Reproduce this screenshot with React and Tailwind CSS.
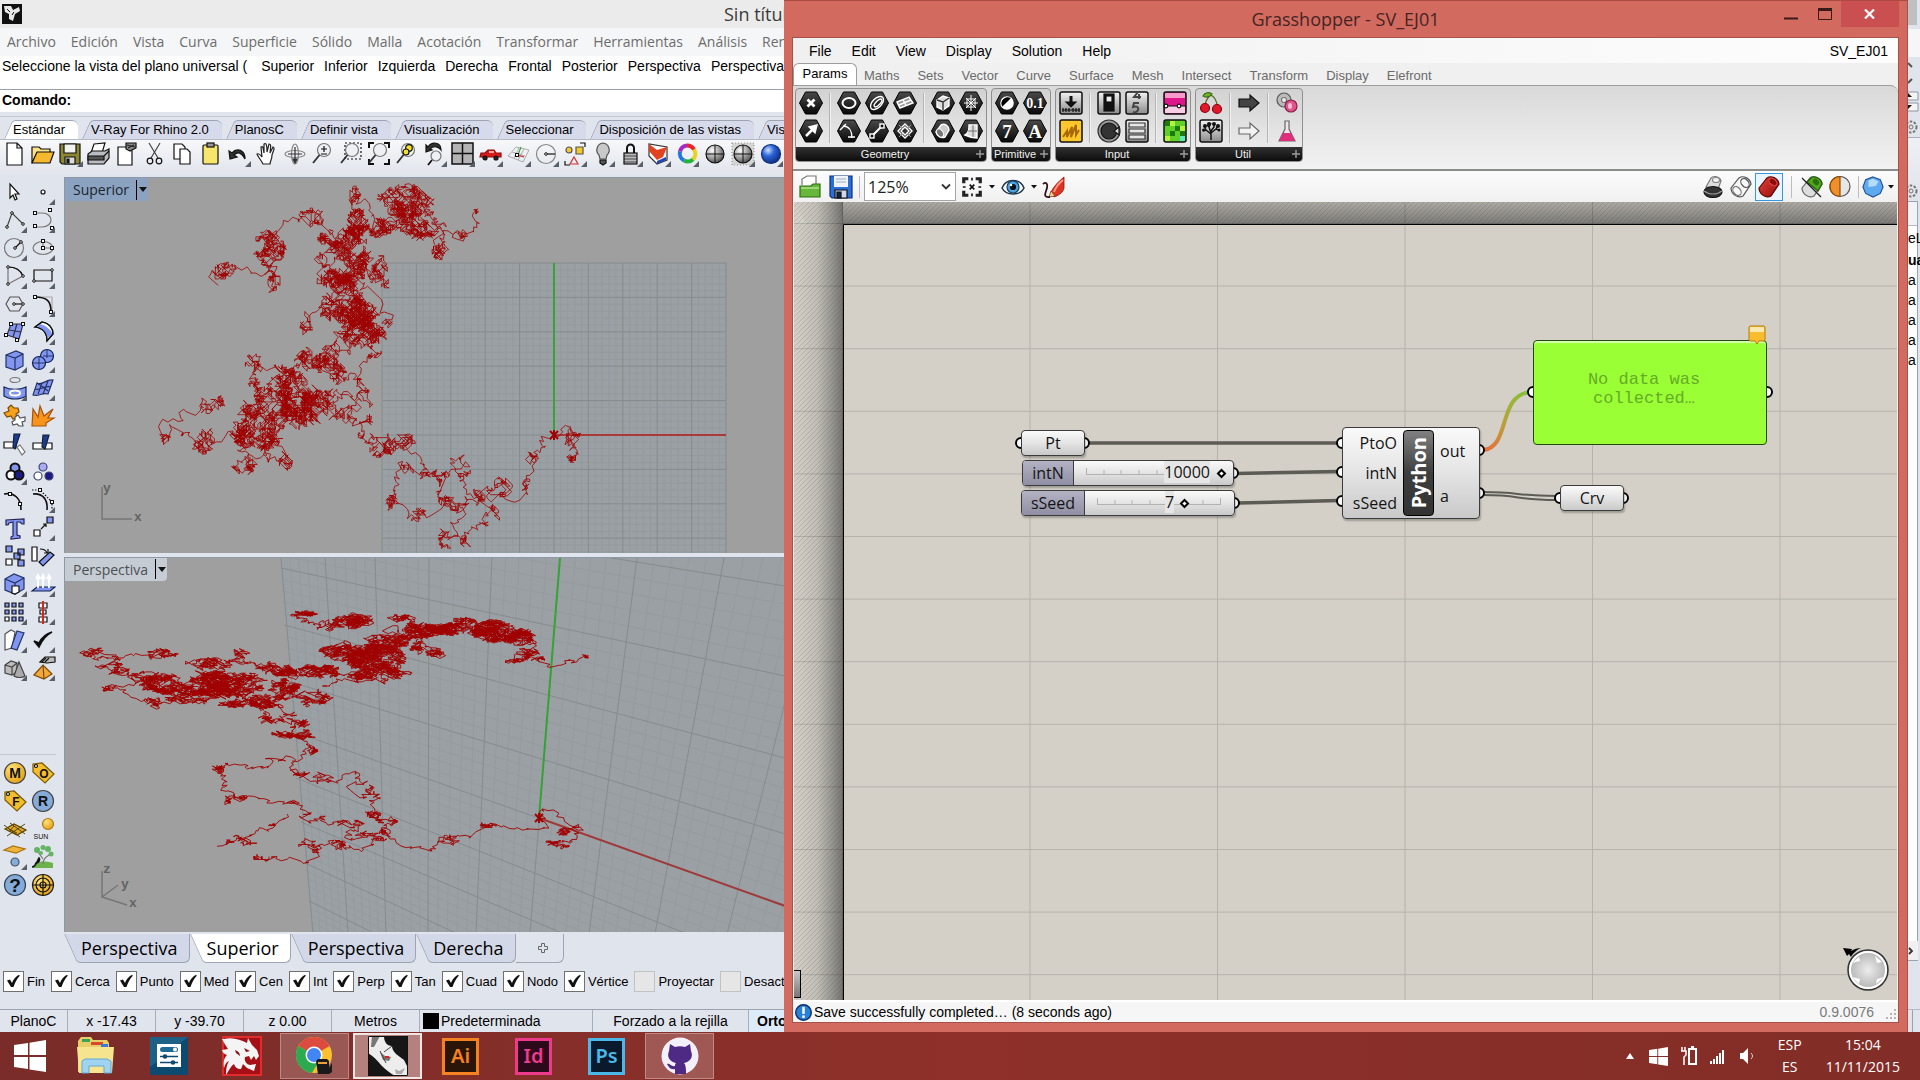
import React from "react";

/* ---------- deterministic random walks drawn in the viewports ---------- */

function makeRandom(seed) {
  let s = seed;
  return () => {
    s = (s * 1664525 + 1013904223) % 4294967296;
    return s / 4294967296;
  };
}

const DIRS = [[1, 0], [1, 1], [0, 1], [-1, 1], [-1, 0], [-1, -1], [0, -1], [1, -1]];

// stops: [x, y, rx, ry, steps, jump]
function walkPath(stops, seed, sx, sy) {
  const rnd = makeRandom(seed);
  let x = stops[0][0];
  let y = stops[0][1];
  let d = `M${x} ${y}`;
  const push = () => {
    d += `L${x.toFixed(1)} ${y.toFixed(1)}`;
  };
  for (const [tx, ty, rx = 2, ry = 2, n = 0, jump = 0] of stops) {
    if (jump) {
      x = tx;
      y = ty;
      d += `M${x} ${y}`;
    }
    let guard = 0;
    while (Math.hypot(tx - x, ty - y) > 5 && guard < 80) {
      const dist = Math.hypot(tx - x, ty - y);
      const dir = DIRS[Math.floor(rnd() * 8)];
      x += dir[0] * sx + ((tx - x) / dist) * 2.2;
      y += dir[1] * sy + ((ty - y) / dist) * 2.2;
      push();
      guard += 1;
    }
    for (let i = 0; i < n; i += 1) {
      const dir = DIRS[Math.floor(rnd() * 8)];
      const len = 0.7 + rnd() * 1.1;
      let nx = x + dir[0] * sx * len;
      let ny = y + dir[1] * sy * len;
      const e = ((nx - tx) / rx) ** 2 + ((ny - ty) / ry) ** 2;
      if (e > 1.1 + rnd() * 0.9) {
        nx = x + Math.sign(tx - x) * sx * rnd();
        ny = y + Math.sign(ty - y) * sy * rnd();
      }
      x = nx;
      y = ny;
      push();
    }
  }
  return d;
}

const TOP_WALK = walkPath([
  [489, 257], [500, 248], [509, 263, 8, 13, 34], [502, 280, 8, 6, 24], [486, 262, 2, 2, 0, 1], [470, 280, 8, 6, 24],
  [461, 300, 4, 12, 18], [458, 320], [435, 313, 14, 12, 60], [414, 313, 6, 10, 30], [398, 290, 14, 10, 30],
  [375, 293, 8, 14, 36], [389, 326, 16, 7, 44], [380, 360, 6, 12, 36], [398, 363, 10, 6, 26], [426, 336, 8, 10, 26],
  [412, 324], [375, 323, 4, 6, 10], [352, 336, 12, 6, 36], [326, 316, 6, 16, 40], [343, 293, 6, 8, 16], [361, 296, 10, 4, 26],
  [347, 273], [338, 263, 12, 8, 50], [315, 266, 16, 11, 120], [292, 256], [301, 240, 6, 8, 20],
  [273, 226, 30, 22, 420], [227, 233, 32, 32, 640], [228, 222, 12, 22, 240], [195, 253, 28, 16, 480],
  [181, 286, 14, 10, 40], [170, 292, 5, 5, 16], [205, 272], [218, 286, 9, 11, 46], [190, 262], [135, 263, 14, 12, 90],
  [100, 256, 5, 10, 22], [100, 246], [121, 240], [144, 223, 12, 12, 60], [181, 243, 15, 15, 120, 1], [190, 210, 8, 8, 40],
  [188, 186, 8, 9, 40], [213, 196, 14, 8, 50], [246, 183, 14, 11, 150], [273, 183, 16, 10, 120], [273, 200, 8, 6, 40],
  [294, 198, 6, 10, 20], [302, 175], [310, 173, 8, 8, 25], [278, 156, 32, 18, 420], [290, 136, 18, 14, 520],
  [273, 120, 25, 22, 460], [241, 143, 6, 14, 40], [322, 145, 5, 5, 14, 1], [273, 83, 26, 28, 520], [315, 93, 7, 18, 80],
  [320, 108, 5, 6, 14], [285, 70, 14, 18, 200], [269, 60, 14, 10, 120], [246, 40, 12, 8, 70], [230, 40], [215, 52],
  [204, 70, 14, 15, 240], [209, 106, 7, 10, 40], [200, 90], [158, 93, 14, 8, 80], [154, 107],
  [292, 46, 10, 15, 260, 1], [287, 16, 8, 8, 40], [320, 50, 15, 10, 150], [338, 23, 25, 14, 480], [357, 46, 19, 12, 300],
  [375, 73, 7, 9, 70], [394, 56, 9, 4, 20], [408, 50], [410, 34, 3, 6, 12],
], 7, 3, 3);

const PERSP_WALK = walkPath([
  [474, 260], [486, 251], [500, 262], [504, 270, 12, 9, 44], [508, 286], [486, 288, 15, 5, 44],
  [476, 262, 2, 2, 0, 1], [477, 269], [449, 269], [426, 264, 14, 5, 30], [403, 276], [384, 283, 12, 7, 25],
  [366, 296], [343, 293], [326, 276, 10, 14, 40], [301, 260, 20, 6, 50], [306, 240, 9, 14, 30], [283, 223, 16, 8, 24],
  [259, 223, 12, 8, 26], [236, 213, 8, 5, 24], [204, 206], [164, 211, 16, 5, 50], [166, 226], [170, 240, 10, 12, 50],
  [204, 241], [227, 246, 6, 4, 10], [246, 260, 12, 5, 20], [283, 270, 14, 8, 40], [301, 283, 16, 8, 44],
  [273, 290, 10, 8, 30], [241, 290, 12, 9, 28], [236, 302], [204, 300, 16, 4, 26], [222, 256, 2, 2, 0, 1],
  [195, 270], [181, 283, 18, 5, 50], [149, 290],
  [227, 203, 2, 2, 0, 1], [248, 190, 5, 7, 34], [232, 176, 18, 4, 80], [213, 178, 14, 5, 54], [222, 166, 20, 5, 70],
  [200, 160, 10, 5, 44], [236, 155], [200, 143, 30, 6, 220], [246, 140, 18, 7, 110], [218, 130, 14, 9, 220],
  [167, 146, 12, 4, 80], [153, 126, 44, 11, 1100], [102, 126, 22, 8, 360], [126, 140, 24, 5, 130], [88, 146, 9, 7, 30],
  [65, 136], [42, 131, 8, 3, 24], [79, 120, 16, 6, 90], [47, 110, 16, 5, 70], [33, 95, 16, 4, 54], [65, 99],
  [98, 95, 16, 4, 70], [149, 106, 30, 5, 160, 1], [176, 95, 9, 4, 34], [218, 110, 22, 7, 200], [255, 113, 20, 6, 240],
  [310, 116, 24, 9, 270], [312, 100, 24, 13, 800], [283, 93, 26, 9, 320], [262, 128, 14, 1, 12, 1], [300, 120, 10, 4, 30],
  [345, 115, 3, 2, 4], [320, 83, 22, 7, 240], [347, 73, 24, 7, 340], [384, 71, 20, 5, 420], [352, 90, 7, 6, 50],
  [370, 96, 8, 8, 54], [338, 60, 12, 4, 60], [287, 63, 18, 6, 280, 1], [264, 68, 12, 5, 40], [232, 56, 16, 3, 100],
  [398, 63, 14, 3, 60, 1], [431, 73, 22, 9, 560], [454, 82, 14, 9, 300], [462, 94, 10, 5, 70], [449, 103, 10, 2, 40],
  [477, 101, 12, 2, 25], [500, 101], [521, 98, 5, 2, 12],
], 23, 3.6, 1.8);

/* ---------- small drawing helpers ---------- */

function Svg({ size = 24, children, className = "" }) {
  return (
    <svg viewBox="0 0 24 24" width={size} height={size} fill="none" stroke="#111" strokeWidth="1.2" className={className} aria-hidden="true">
      {children}
    </svg>
  );
}

const Tri = () => <path d="M27 21v6h-6z" fill="#5b6068" stroke="none" />;

function ToolButton({ label, tri, children, className = "" }) {
  return (
    <button type="button" aria-label={label} className={`relative flex h-7 w-7 shrink-0 items-center justify-center ${className}`}>
      <svg viewBox="0 0 28 28" width="28" height="28" fill="none" stroke="#111" strokeWidth="1.2" aria-hidden="true">
        <g transform="translate(3 2)">{children}</g>
        {tri ? <Tri /> : null}
      </svg>
    </button>
  );
}

const sq = (x, y, f = "#fff") => <rect x={x - 1.5} y={y - 1.5} width="3" height="3" fill={f} stroke="#111" strokeWidth="1" />;
const dot = (x, y) => <circle cx={x} cy={y} r="1.3" fill="#fff" stroke="#111" strokeWidth="1" />;

const lens = (
  <>
    <circle cx="13" cy="8" r="6.5" fill="#eef0f4" stroke="#777" />
    <path d="M8.5 13L2 21" stroke="#333" strokeWidth="1.8" />
  </>
);

const MAIN_TOOLS = [
  ["Nuevo", 0, <path d="M4 1h10l5 5v17H4zM14 1v5h5" fill="#fff" />],
  ["Abrir", 0, <><path d="M1 5h7l2 2h9v4H6L1 21z" fill="#fbe38a" /><path d="M1 21L6 10h17l-4 11z" fill="#f5b82e" /></>],
  ["Guardar", 1, <><path d="M1 2h20v20H3l-2-2z" fill="#8d8733" /><path d="M5 2h12v9H5z" fill="#f2f2ee" /><path d="M6 15h10v7H6z" fill="#ddd" /><path d="M8 17h2v4H8z" fill="#222" /></>],
  ["Imprimir", 0, <><path d="M7 2l11-1-3 10H4z" fill="#fff" /><path d="M1 12l4-3h13l4-2v9l-5 6H1z" fill="#b9bcc0" /><path d="M1 14h16v4H1zM17 14l5-5" fill="#555" /></>],
  ["Propiedades", 0, <><path d="M3 5h10l4 4v14H3z" fill="#fff" /><path d="M11 1h10v5l-6 3-4-2z" fill="#888" /><path d="M12 3l8 2M13 6l6-3" stroke="#222" /></>],
  ["Cortar", 0, <><path d="M6 1l9 15M17 1L8 16" stroke="#444" /><circle cx="7" cy="19" r="2.8" /><circle cx="16" cy="19" r="2.8" /></>],
  ["Copiar", 0, <><path d="M3 2h8l3 3v12H3z" fill="#fff" /><path d="M9 7h7l3 3v12H9z" fill="#fff" /></>],
  ["Pegar", 0, <><rect x="4" y="3" width="15" height="19" rx="1" fill="#f7e56c" /><rect x="8" y="1" width="7" height="4" fill="#999" /></>],
  ["Deshacer", 1, <path d="M2 9l1 8 7-2-3-2c4-4 8-2 11 4 0-9-8-12-13-6z" fill="#333" />],
  ["Encuadre", 0, <path d="M8 22c-2-4-5-7-6-10 2-1 3 0 5 3L6 5c2-1 2 0 3 6V2c2-1 3 0 3 8l2-8c2 0 2 1 1 9l3-6c2 1 1 2-1 8 0 5-2 6-2 9z" fill="#fff" stroke="#222" />],
  ["Rotar vista", 0, <><ellipse cx="12" cy="12" rx="10" ry="3.5" stroke="#888" /><ellipse cx="12" cy="12" rx="3.5" ry="10" stroke="#888" /><path d="M12 5v14M5 12h14M10 17l2 4 2-4z" stroke="#333" fill="#222" /></>],
  ["Zoom dinámico", 0, <>{lens}<path d="M10 7h6M13 4v6M10 12h6" /></>],
  ["Zoom ventana", 0, <><path d="M6 1h16v16H6z" strokeDasharray="2 2" />{lens}</>],
  ["Zoom extensión", 0, <><path d="M2 6V1h5M17 1h5v5M22 17v5h-5M2 17v5h5" strokeWidth="2" />{lens}</>],
  ["Zoom seleccionado", 0, <>{lens}<circle cx="14" cy="6" r="3.3" fill="#f2e228" /><circle cx="11" cy="10" r="3" fill="#f2e228" /></>],
  ["Deshacer vista", 1, <><circle cx="13" cy="14" r="5" fill="#eef0f4" stroke="#777" /><path d="M9 18l-4 5" strokeWidth="1.8" /><path d="M3 3v7l6-2-2-1c4-4 9-2 11 1C18 0 9-1 5 5z" fill="#333" /></>],
  ["Cuatro vistas", 1, <><rect x="1" y="1" width="21" height="21" fill="#b4b4b4" strokeWidth="1.5" /><path d="M11.5 1v21M1 11.5h21" strokeWidth="1.5" /></>],
  ["Vista derecha", 1, <><path d="M1 15l1-4h4l3-3h6l2 3h5v4z" fill="#d91a1a" stroke="#8d0b0b" /><path d="M10 10h5" stroke="#fff" /><circle cx="6" cy="16" r="2" fill="#222" /><circle cx="17" cy="16" r="2" fill="#222" /></>],
  ["Plano de construcción", 1, <><path d="M1 14L9 5l13 3-6 12zM5 10l13 4M12 6l-5 10M17 7l-6 11" stroke="#999" strokeWidth=".8" /><path d="M10 13l7 2" stroke="#c22" /><path d="M11 13l3-8" stroke="#3a3" />{sq(10, 13)}</>],
  ["Vista circular", 1, <><circle cx="11" cy="12" r="9.5" stroke="#888" /><path d="M11 12h9" />{dot(11, 12)}</>],
  ["Selección", 1, <><path d="M17 1h5v4M2 19v4h5" /><circle cx="6" cy="8" r="3" fill="#f4c92c" stroke="#555" /><path d="M13 5h7v7h-7z" fill="#f4c92c" stroke="#555" /><path d="M11 15l4 7H7z" stroke="#c33" /></>],
  ["Ocultar", 1, <><path d="M12 1a7 7 0 0 0-4 12l1 4h6l1-4a7 7 0 0 0-4-12z" fill="#c9c9c9" stroke="#555" /><path d="M9 18h6v3l-3 2-3-2z" fill="#555" /></>],
  ["Bloquear", 1, <><path d="M8 11V6a3.5 3.5 0 0 1 7 0v5" strokeWidth="2" /><rect x="5" y="11" width="13" height="11" fill="#bbb" /><path d="M5 14h13M5 17h13M5 20h13" strokeWidth=".7" /></>],
  ["Capas", 1, <><path d="M2 2v12l8 8 10-4V5z" fill="#fff" stroke="#333" /><path d="M2 2l8 6 10-3-4 10-6 3-8-9z" fill="#e2421f" stroke="none" /><path d="M10 19l9-4v3l-9 4z" fill="#2146b8" stroke="none" /></>],
  ["Color", 1, <><path d="M12 3.5a8 8 0 0 1 7 4" stroke="#e22" strokeWidth="4" /><path d="M19 7.5a8 8 0 0 1-1 10" stroke="#e7d21c" strokeWidth="4" /><path d="M18 17.5a8 8 0 0 1-9 1" stroke="#25b23c" strokeWidth="4" /><path d="M9 18.5a8 8 0 0 1-4-9" stroke="#2377dd" strokeWidth="4" /><path d="M5 9.500a8 8 0 0 1 7-6" stroke="#a22cc8" strokeWidth="4" /></>],
  ["Sombreado", 0, <><circle cx="12" cy="12" r="9" fill="url(#ball)" /><path d="M12 3v18M3 12h18" strokeWidth="1" /></>],
  ["Renderizado", 1, <><path d="M1 1h22v22H1z" fill="#d5d5d5" stroke="#999" strokeDasharray="1 2" /><circle cx="12" cy="12" r="9" fill="url(#ball)" /><path d="M12 3v18M3 12h18" strokeWidth="1" /></>],
  ["Render", 1, <circle cx="12" cy="12" r="9.5" fill="url(#blueball)" stroke="#10307a" />],
];

const BLUE = "#8296ef";
const SIDE_TOOLS = [
  ["Seleccionar", 0, <path d="M7 4v14l3-3 2 5 2-1-2-5h4z" fill="#fff" />],
  ["Punto", 1, <circle cx="12" cy="12" r="2" fill="#fff" />],
  ["Polilínea", 1, <><path d="M4 19L9 5l11 11" stroke="#444" />{dot(4, 19)}{dot(9, 5)}{dot(20, 16)}</>],
  ["Curva", 1, <><path d="M4 5h7c12 0 12 14 0 14H4" stroke="#777" />{sq(4, 5)}{sq(4, 18)}{sq(19, 2)}{sq(21, 20)}</>],
  ["Círculo", 1, <><circle cx="11" cy="12" r="9.5" stroke="#777" /><path d="M12 12l6-6" />{dot(12, 12)}{dot(18, 6)}</>],
  ["Elipse", 1, <><ellipse cx="12" cy="12" rx="10" ry="6.5" stroke="#777" /><path d="M12 5v7h9" stroke="#777" />{sq(12, 5)}{sq(12, 12)}{sq(21, 12)}</>],
  ["Arco", 1, <><path d="M5 3c9 0 13 4 15 9L5 20z" stroke="#777" /><path d="M5 3c9 0 13 4 15 9" />{dot(5, 3)}{dot(20, 12)}{dot(5, 20)}</>],
  ["Rectángulo", 1, <><path d="M3 6h18v11H3z" />{dot(21, 6)}{dot(3, 17)}</>],
  ["Polígono", 1, <><path d="M7 5h9l4 7-4 7H7l-4-7z" stroke="#555" /><path d="M11 12h8" />{dot(11, 12)}{dot(20, 12)}</>],
  ["Empalme", 1, <><path d="M6 5h15v13" stroke="#aaa" /><path d="M4 5c12 0 16 4 16 15" strokeWidth="1.6" />{sq(4, 5)}{sq(20, 20)}</>],
  ["Superficie", 1, <><path d="M8 4h12l-4 15-12-4z" fill={BLUE} stroke="#334" /><path d="M14 4l-4 13M6 10l12 2" stroke="#334" />{sq(8, 4)}{sq(20, 4)}{sq(3, 15)}{sq(14, 20)}</>],
  ["Barrido", 1, <><path d="M4 7l7-5c7 1 11 6 11 12l-6 7c0-8-4-13-12-14z" fill="#fff" /><path d="M9 4c7 2 11 6 13 11l-6 3c-1-6-5-9-10-11z" fill={BLUE} stroke="none" /><path d="M4 7l7-5c7 1 11 6 11 12l-6 7c0-8-4-13-12-14z" /></>],
  ["Caja", 1, <><path d="M3 7l10-4 7 3v12l-8 4-9-3z" fill={BLUE} stroke="#236" /><path d="M3 7l9 3 8-4M12 10v12" stroke="#236" /></>],
  ["Booleana", 1, <><circle cx="16" cy="8" r="6.5" fill={BLUE} stroke="#125" /><circle cx="8" cy="15" r="6.5" fill={BLUE} stroke="#125" /><path d="M8 9v13M2 15h13M16 2v8M12 8h10" stroke="#125" strokeWidth=".8" /></>],
  ["Proyectar", 1, <><ellipse cx="12" cy="4" rx="5" ry="2.5" stroke="#777" /><path d="M1 11c6 3 16 3 22 0v9c-6 4-16 4-22 0z" fill={BLUE} stroke="#125" /><ellipse cx="12" cy="17" rx="5" ry="2.5" stroke="#fff" strokeWidth="2" /></>],
  ["Malla", 1, <><path d="M6 7c6 3 8-4 16-3l-5 14c-6-2-9 3-15 1z" fill={BLUE} stroke="#236" /><path d="M4 13c6 2 9-4 16-2M11 7L7 18M17 5l-5 13M6 7l6 4M12 11l5 4" stroke="#236" /></>],
  ["Descomponer", 0, <><path d="M5 4l3-3 3 3h4l1 4-3 2 1 4-4 1-2-3-4 1-3-4 5-2z" fill="#f6a21c" stroke="#7a4a08" /><path d="M12 13l3-2 2 3 5-1 0 4-3 1 1 4-4 0-2-2-4 1-1-3 3-2z" fill="#fff" stroke="#555" /></>],
  ["Explotar", 0, <path d="M1 22L2 5l5 8 2-11 4 10 9-7-5 9h6l-8 5v3z" fill="#f8941c" stroke="#a5540a" />],
  ["Recortar", 0, <><path d="M1 10h12v6H1z" fill="#fff" /><path d="M14 15l3-2 5 7-3 3z" fill="#fff" stroke="#777" /><path d="M11 2h6l-5 15-2-2z" fill="#1d3a90" stroke="#123" /></>],
  ["Partir", 0, <><path d="M2 11h19v6H2z" fill="#fff" /><path d="M12 3h6l-4 14-3-2z" fill="#1d3a90" stroke="#123" /></>],
  ["Agrupar", 1, <><circle cx="12" cy="8" r="4.5" fill={BLUE} strokeWidth="2" /><circle cx="8" cy="15" r="4.5" fill="#fff" strokeWidth="2" /><circle cx="16" cy="15" r="4.5" fill="#1a1a80" strokeWidth="2" /></>],
  ["Desagrupar", 0, <><circle cx="12" cy="7" r="4" fill="#a9aef2" stroke="#447" /><circle cx="7" cy="16" r="4" fill="#fff" stroke="#447" /><circle cx="18" cy="16" r="4" fill="#1a1a80" stroke="#447" /></>],
  ["Editar curva", 0, <><path d="M1 6c10-2 17 4 17 16" strokeWidth="1.6" />{sq(7, 6)}{sq(17, 16)}</>],
  ["Puntos de control", 1, <><path d="M2 6c10-1 15 6 14 16" strokeWidth="1.6" /><path d="M1 2h8l12 12v7" strokeDasharray="1.5 1.5" />{sq(9, 2)}{sq(21, 14)}</>],
  ["Texto", 0, <path d="M3 4l18-1v5h-2l-2-2h-3v13l3 1v2l-9 1v-2l2-1V6L6 7 5 9H3z" fill={BLUE} stroke="#225" />],
  ["Mover", 1, <><path d="M16 1h6v6h-6z" fill={BLUE} /><path d="M3 14h6v6H3z" fill="#fff" /><path d="M10 13l5-5M15 11V8h-3" /></>],
  ["Copiar objetos", 0, <><path d="M3 2h6v6H3zM15 5h6v6h-6zM11 9h6v6h-6zM15 16h6v6h-6z" fill={BLUE} /><path d="M3 15h6v6H3z" fill="#fff" /></>],
  ["Rotar", 0, <><path d="M1 3h5v14H1z" fill="#fff" /><path d="M9 5c4 0 6 1 7 4M17 5v4h-4" /><path d="M8 18L19 8l4 3-11 11z" fill={BLUE} /></>],
  ["Sólido", 1, <><path d="M2 7l9-5 10 4v11l-9 5-10-4z" fill={BLUE} stroke="#236" /><path d="M2 7l10 4 9-5M12 11v11" stroke="#236" /><path d="M9 14h7v6l-4 2-3-1z" fill="#fff" /></>],
  ["Extruir", 1, <><path d="M1 19l5-4h18l-5 4z" fill={BLUE} stroke="#125" /><path d="M7 16V5M12 16V5M18 16V5M5 7l2-4 2 4M10 7l2-4 2 4M16 7l2-4 2 4" stroke="#fff" strokeWidth="1.8" /></>],
  ["Matriz", 1, <><path d="M2 3h4v4H2zM9 3h4v4H9zM16 3h4v4h-4zM2 10h4v4H2zM9 10h4v4H9zM16 10h4v4h-4zM9 17h4v4H9zM16 17h4v4h-4z" fill={BLUE} /><path d="M2 17h4v4H2z" fill="#fff" /></>],
  ["Alinear", 1, <><path d="M8 3h8v5H8zM9 10h6v4H9zM8 17h8v5H8z" fill="#fff" /><path d="M12 1v23" stroke="#d22" strokeWidth="2" /></>],
  ["Fluir", 1, <><path d="M2 6l6-4 4 2-3 16-7 2z" fill="#fff" stroke="#555" /><path d="M14 3l7 2-7 17-6-2z" fill={BLUE} stroke="#236" /></>],
  ["Comprobar", 1, <path d="M3 13l5 6C11 12 15 7 21 4 14 6 10 11 8 15z" fill="#000" strokeWidth="1.6" />],
  ["Primitivas", 1, <><path d="M2 9l6-4 6 2v9l-5 3-7-2z" fill="#bcbcbc" stroke="#444" /><path d="M2 9l7 2 5-4M9 11v8" stroke="#444" /><path d="M16 6l6 14c-3 2-8 2-11 0z" fill="#aaa" stroke="#444" /></>],
  ["Pirámide", 1, <><path d="M3 19L12 9l9 9-8 5z" fill="#f2a93b" stroke="#7a4a08" /><path d="M12 9l1 14" stroke="#7a4a08" /><path d="M9 6l5-5h10v5l-8 1z" fill="#bbb" /><path d="M11 6l4-4M14 6l4-4" /></>],
];

const letterIcon = (t, fill) => (
  <>
    <circle cx="12" cy="12" r="10.5" fill={fill} stroke="#444" />
    <text x="12" y="17" textAnchor="middle" fontFamily="Liberation Sans, sans-serif" fontWeight="700" fontSize="14" fill="#111" stroke="none">{t}</text>
  </>
);
const tagIcon = (t) => (
  <>
    <path d="M2 3l9-1 12 11-9 9L2 11z" fill="#f3bd2c" stroke="#7a5a06" />
    <circle cx="5" cy="5" r="1.5" fill="#fff" />
    <text x="13" y="17" textAnchor="middle" fontFamily="Liberation Sans, sans-serif" fontWeight="700" fontSize="12" fill="#111" stroke="none">{t}</text>
  </>
);

const VRAY_TOOLS = [
  ["V-Ray materiales", 0, letterIcon("M", "url(#gold)")],
  ["V-Ray opciones", 0, tagIcon("O")],
  ["V-Ray framebuffer", 0, tagIcon("F")],
  ["V-Ray render", 0, letterIcon("R", "#85abd8")],
  ["Plano infinito", 0, <><path d="M2 12l9-5 12 6-9 5z" fill="#e0a922" stroke="#5a4304" /><path d="M1 8l16 12M7 6l15 11M22 7L4 19M6 12l8 4M11 9l-5 6" stroke="#5a4304" strokeWidth="1" /></>],
  ["Sol", 0, <><circle cx="17" cy="7" r="5.5" fill="url(#gold)" stroke="#b27c10" /><text x="10" y="22" textAnchor="middle" fontFamily="Liberation Sans, sans-serif" fontSize="7" fill="#111" stroke="none">SUN</text></>],
  ["Luz", 1, <><path d="M1 5l9-4 12 3-9 4z" fill="#f0b43a" stroke="#a87412" /><circle cx="12" cy="17" r="4" fill="#85abd8" stroke="#456" /></>],
  ["Proxy", 0, <><path d="M2 23c2-6 8-8 20-5v5z" fill="#6cb34e" stroke="none" /><path d="M12 19c0-5 3-7 6-9M12 14L7 7" stroke="#777" /><g fill="#63b463" stroke="none"><circle cx="6" cy="5" r="3" /><circle cx="12" cy="2.5" r="2.5" /><circle cx="17" cy="4" r="3" /><circle cx="20" cy="9" r="2.5" /><circle cx="10" cy="8" r="2" /></g><path d="M1 22c4 0 5-6 7-9 2 3-2 6-4 5" strokeWidth="1.5" /></>],
  ["Ayuda", 0, <><circle cx="12" cy="12" r="10.5" fill="#85abd8" stroke="#345" /><text x="12" y="19" textAnchor="middle" fontFamily="Liberation Sans, sans-serif" fontWeight="700" fontSize="19" fill="#111" stroke="none">?</text></>],
  ["Enfocar", 0, <><circle cx="12" cy="12" r="10.5" fill="url(#gold)" stroke="#222" /><circle cx="12" cy="12" r="7" /><circle cx="12" cy="12" r="3" /><path d="M12 1v22M1 12h22" /></>],
];

function Defs() {
  return (
    <svg width="0" height="0" className="absolute" aria-hidden="true">
      <defs>
        <radialGradient id="ball" cx=".35" cy=".3" r=".8"><stop offset="0" stopColor="#fff" /><stop offset="1" stopColor="#444" /></radialGradient>
        <radialGradient id="blueball" cx=".35" cy=".3" r=".8"><stop offset="0" stopColor="#cfe0ff" /><stop offset=".4" stopColor="#2a63d8" /><stop offset="1" stopColor="#0b2470" /></radialGradient>
        <radialGradient id="gold" cx=".35" cy=".3" r=".8"><stop offset="0" stopColor="#ffe27a" /><stop offset="1" stopColor="#e09a10" /></radialGradient>
        <radialGradient id="disc" cx=".5" cy=".5" r=".5"><stop offset="0" stopColor="#ececec" /><stop offset="1" stopColor="#b2b2b2" /></radialGradient>
        <linearGradient id="hexfill" x1="0" y1="0" x2="0" y2="1"><stop offset="0" stopColor="#4a4a4a" /><stop offset="1" stopColor="#080808" /></linearGradient>
        <linearGradient id="btnfill" x1="0" y1="0" x2="0" y2="1"><stop offset="0" stopColor="#f4f4f4" /><stop offset="1" stopColor="#8a8a8a" /></linearGradient>
        <linearGradient id="redfill" x1="0" y1="0" x2="1" y2="1"><stop offset="0" stopColor="#e8433a" /><stop offset="1" stopColor="#8f0a0a" /></linearGradient>
      </defs>
    </svg>
  );
}

/* ---------- Rhino window ---------- */

const seg = "font-['Open_Sans',sans-serif]";

function TopTab({ label, active }) {
  const fill = active
    ? "before:bg-white after:bg-white"
    : "before:bg-[#d6daea] after:bg-[#d6daea]";
  return (
    <button
      type="button"
      className={`relative h-[19px] shrink-0 px-[13px] text-[13px] leading-[19px] whitespace-nowrap text-black before:absolute before:bottom-0 before:left-1 before:h-full before:w-5 before:origin-bottom before:-skew-x-[24deg] before:rounded-tl-sm before:border-t before:border-l before:border-[#9ea4b4] before:content-[''] after:absolute after:inset-y-0 after:right-0 after:left-4 after:rounded-tr-md after:border-t after:border-[#9ea4b4] after:content-[''] ${fill}`}
    >
      <span className="relative z-10">{label}</span>
    </button>
  );
}

function BottomTab({ label, active }) {
  const fill = active
    ? "before:bg-white after:bg-white"
    : "before:bg-[#d3d8e8] after:bg-[#d3d8e8]";
  return (
    <button
      type="button"
      className={`relative h-[29px] shrink-0 pr-3 pl-[17px] text-[18px] leading-[29px] text-black before:absolute before:top-0 before:left-0 before:h-full before:w-7 before:origin-top before:skew-x-[24deg] before:rounded-bl-sm before:border-b before:border-l before:border-[#9ea4b4] before:content-[''] after:absolute after:inset-y-0 after:right-0 after:left-5 after:rounded-br-md after:border-r after:border-b after:border-[#9ea4b4] after:content-[''] ${seg} ${fill}`}
    >
      <span className="relative z-10">{label}</span>
    </button>
  );
}

function OriginMark({ x, y }) {
  return <path d={`M${x - 4} ${y - 4}l8 8M${x + 4} ${y - 4}l-8 8M${x} ${y - 5}v10`} stroke="#a00000" strokeWidth="2" />;
}

function TopView() {
  const major = [];
  const minor = [];
  for (let i = 0; i <= 50; i += 1) {
    const x = 317 + i * 6.88;
    const y = 85 + i * 6.88;
    const v = <path key={`v${i}`} d={`M${x} 85V376`} />;
    const h = <path key={`h${i}`} d={`M317 ${y}H661`} />;
    (i % 5 === 0 ? major : minor).push(v, h);
  }
  return (
    <svg className="absolute inset-0 h-full w-full" fill="none" aria-label="Vista superior" role="img">
      <rect x="317" y="85" width="344" height="400" fill="#9aa0a3" />
      <g stroke="#8f9598" strokeWidth="1" opacity=".5">{minor}</g>
      <g stroke="#868b8e" strokeWidth="1">{major}</g>
      <path d="M489 257V85" stroke="#35a335" strokeWidth="2" />
      <path d="M489 257H661" stroke="#a83a3a" strokeWidth="2" />
      <path d={TOP_WALK} stroke="#a00000" strokeWidth=".8" />
      <OriginMark x={489} y={257} />
      <g stroke="#777" strokeWidth="1.5"><path d="M37 309v32h30" /></g>
      <g fill="#636363" fontFamily="Liberation Mono, monospace" fontWeight="700" fontSize="13">
        <text x="38" y="314">y</text>
        <text x="69" y="343">x</text>
      </g>
    </svg>
  );
}

const PV = [[216, 248], [260, 283], [310, 321], [364, 363], [427, 411], [495, 465], [572, 524], [659, 590], [756, 662], [866, 742]];
const PH = [[-54, 28], [10, 118], [67, 200], [123, 276], [173, 347], [220, 415], [264, 470], [305, 528], [343, 579], [378, 630]];
const PHX = [213, 216, 219, 223, 227, 231, 236, 240, 244, 248];

function PerspectiveView() {
  const minor = [];
  const lerp = (a, b, t) => a + (b - a) * t;
  for (let i = 0; i < 9; i += 1) {
    for (let k = 1; k < 5; k += 1) {
      const t = k / 5;
      minor.push(<path key={`v${i}-${k}`} d={`M${lerp(PV[i][0], PV[i + 1][0], t)} 0L${lerp(PV[i][1], PV[i + 1][1], t)} 376`} />);
      minor.push(<path key={`h${i}-${k}`} d={`M${lerp(PHX[i], PHX[i + 1], t)} ${lerp(PH[i][0], PH[i + 1][0], t)}L720 ${lerp(PH[i][1], PH[i + 1][1], t)}`} />);
    }
  }
  return (
    <svg className="absolute inset-0 h-full w-full" fill="none" aria-label="Vista en perspectiva" role="img">
      <path d="M216 0H900V376H248z" fill="#9aa0a3" />
      <g stroke="#8f9598" strokeWidth="1" opacity=".45">{minor}</g>
      <g stroke="#868b8e" strokeWidth="1">
        {PV.map(([a, b]) => <path key={a} d={`M${a} 0L${b} 376`} />)}
        {PH.map(([a, b], i) => <path key={a} d={`M${PHX[i]} ${a}L720 ${b}`} />)}
      </g>
      <path d="M474 260L495 0" stroke="#35a335" strokeWidth="2" />
      <path d="M474 260L720 348" stroke="#a03a3a" strokeWidth="2" />
      <path d={PERSP_WALK} stroke="#a00000" strokeWidth=".9" />
      <OriginMark x={474} y={260} />
      <g stroke="#777" strokeWidth="1.5"><path d="M37 313v26l16-12M37 339l25 8" /></g>
      <g fill="#636363" fontFamily="Liberation Mono, monospace" fontWeight="700" fontSize="13">
        <text x="38" y="315">z</text>
        <text x="56" y="330">y</text>
        <text x="64" y="349">x</text>
      </g>
    </svg>
  );
}

function Viewport({ name, active, children }) {
  return (
    <section className="relative min-h-0 flex-1 overflow-hidden border-t border-l border-[#8e98a8] bg-[#9f9f9f]">
      {children}
      <button
        type="button"
        className={`absolute top-0 left-0 flex h-[23px] items-center pl-2 text-[14px] ${seg} ${active ? "bg-[#8ba3c0] text-[#1c2530]" : "rounded-br bg-[#c6ccd4] text-[#4c5055]"}`}
      >
        {name}
        <span className="ml-[7px] flex h-5 w-3 items-center justify-center border-l border-black">
          <svg width="8" height="5" aria-hidden="true"><path d="M0 0h8L4 5z" fill="#111" /></svg>
        </span>
      </button>
    </section>
  );
}

const OSNAPS = [
  ["Fin", 1], ["Cerca", 1], ["Punto", 1], ["Med", 1], ["Cen", 1], ["Int", 1], ["Perp", 1], ["Tan", 1],
  ["Cuad", 1], ["Nodo", 1], ["Vértice", 1], ["Proyectar", 0], ["Desactivar", 0],
];

function Osnap({ label, on }) {
  return (
    <label className="mr-[6px] flex shrink-0 items-center gap-[3px] text-[13px] text-black">
      <span className="relative block h-[21px] w-[21px]">
        <input type="checkbox" defaultChecked={!!on} className="peer block h-[21px] w-[21px] appearance-none border border-[#c2c2c2] bg-[#e6e6e6] checked:border-[#707070] checked:bg-white" />
        <svg viewBox="0 0 21 21" className="pointer-events-none absolute inset-0 hidden h-full w-full peer-checked:block" aria-hidden="true">
          <path d="M4 9.5l3-1 2 3.5c1-3 3-6 6.5-8l1.5.5c-3 3-5 7-6.5 11.5H8z" fill="#111" />
        </svg>
      </span>
      {label}
    </label>
  );
}

function RhinoWindow() {
  return (
    <section className="flex min-w-0 flex-col overflow-hidden bg-[#e0e4ec] font-['Liberation_Sans',Arial,sans-serif]">
      <header className="flex h-7 shrink-0 items-center bg-[#ebebeb]">
        <svg viewBox="0 0 20 20" width="20" height="20" className="ml-[2px]" aria-hidden="true">
          <path d="M0 0h20v20H0z" fill="#111" />
          <path d="M2 2h7l2 4 6-3 1 4-5 3-2 7-4-2v-5L3 8z" fill="#e8e8e8" />
          <path d="M5 5l3 3M12 8l-2 3" stroke="#111" />
        </svg>
        <h1 className={`ml-auto w-[60px] overflow-hidden text-[18px] whitespace-nowrap text-[#3b3b3b] ${seg}`}>Sin título</h1>
      </header>
      <nav className={`flex h-7 shrink-0 items-center gap-[15px] overflow-hidden bg-[#f5f6f7] pb-[2px] pl-[7px] text-[14px] text-[#6d6d6d] ${seg}`}>
        {["Archivo", "Edición", "Vista", "Curva", "Superficie", "Sólido", "Malla", "Acotación", "Transformar", "Herramientas", "Análisis", "Render"].map((m) => (
          <button key={m} type="button" className="shrink-0">{m}</button>
        ))}
      </nav>
      <div className="flex h-[34px] shrink-0 gap-[10px] overflow-hidden border-b border-[#9aa0aa] bg-white pl-[2px] text-[14px] leading-5 whitespace-nowrap text-black">
        <span className="mr-1">Seleccione la vista del plano universal (</span>
        {["Superior", "Inferior", "Izquierda", "Derecha", "Frontal", "Posterior", "Perspectiva", "Perspectiva"].map((o, i) => (
          <button key={`${o}${i}`} type="button" className="h-5 shrink-0">{o}</button>
        ))}
      </div>
      <div className="flex h-[22px] shrink-0 items-center bg-white pb-[2px] pl-[2px] text-[14px] text-black">
        <label htmlFor="cmd" className="font-bold">Comando:</label>
        <input id="cmd" type="text" className="ml-1 min-w-0 flex-1 bg-transparent outline-none" />
      </div>
      <div className="mt-1 flex h-[24px] shrink-0 items-end overflow-hidden border-t border-b border-[#c3c9d6] border-b-[#b5bac8]">
        <TopTab label="Estándar" active />
        {["V-Ray For Rhino 2.0", "PlanosC", "Definir vista", "Visualización", "Seleccionar", "Disposición de las vistas", "Visibilidad"].map((t) => (
          <TopTab key={t} label={t} />
        ))}
      </div>
      <div className="flex h-[37px] shrink-0 overflow-hidden bg-gradient-to-b from-[#f7f8fa] to-[#dfe3eb]">
        {MAIN_TOOLS.map(([label, tri, icon]) => (
          <ToolButton key={label} label={label} tri={tri}>{icon}</ToolButton>
        ))}
      </div>
      <div className="flex min-h-0 flex-1">
        <aside className="w-16 shrink-0 pt-px">
          <div className="grid w-14 grid-cols-2">
            {SIDE_TOOLS.map(([label, tri, icon]) => (
              <ToolButton key={label} label={label} tri={tri}>{icon}</ToolButton>
            ))}
          </div>
          <div className="mt-[72px] grid w-14 grid-cols-2 border-t border-[#c3c8d2] pt-1">
            {VRAY_TOOLS.map(([label, tri, icon]) => (
              <ToolButton key={label} label={label} tri={tri}>{icon}</ToolButton>
            ))}
          </div>
        </aside>
        <div className="flex min-w-0 flex-1 flex-col">
          <div className="flex min-h-0 flex-1 flex-col gap-1">
            <Viewport name="Superior" active><TopView /></Viewport>
            <Viewport name="Perspectiva"><PerspectiveView /></Viewport>
          </div>
          <div className="mt-[2px] flex h-[29px] shrink-0">
            <BottomTab label="Perspectiva" />
            <BottomTab label="Superior" active />
            <BottomTab label="Perspectiva" />
            <BottomTab label="Derecha" />
            <button type="button" aria-label="Nueva vista" className="flex h-[29px] w-12 items-center justify-center rounded-br-md border-r border-b border-[#9ea4b4] pl-2">
              <svg width="10" height="10" aria-hidden="true"><path d="M3.500.5h3v3h3v3h-3v3h-3v-3h-3v-3h3z" fill="#e0e4ec" stroke="#666" /></svg>
            </button>
          </div>
        </div>
      </div>
      <div className="flex h-[46px] shrink-0 items-start overflow-hidden pt-2 pl-[3px]">
        {OSNAPS.map(([l, on]) => <Osnap key={l} label={l} on={on} />)}
      </div>
      <footer className="flex h-[23px] shrink-0 border-t border-[#9ba2ae] text-center text-[14px] leading-[23px] whitespace-nowrap text-black [&>*]:shrink-0 [&>*]:border-r [&>*]:border-[#a9afba]">
        <button type="button" className="w-[68px]">PlanoC</button>
        <span className="w-[88px]">x -17.43</span>
        <span className="w-[88px]">y -39.70</span>
        <span className="w-[88px]">z 0.00</span>
        <span className="w-[88px]">Metros</span>
        <button type="button" className="flex w-[173px] items-center gap-[2px] pl-[3px]"><span className="h-4 w-4 bg-black" />Predeterminada</button>
        <button type="button" className="w-[156px]">Forzado a la rejilla</button>
        <button type="button" className="w-[60px] bg-[#dcebfa] pl-2 text-left font-bold">Orto</button>
      </footer>
    </section>
  );
}

/* ---------- Grasshopper window ---------- */

function Hex({ label, children }) {
  return (
    <button type="button" aria-label={label} className="flex h-7 w-7 items-center justify-center">
      <Svg>
        <path d="M6.5 1h11l6 11-6 11h-11l-6-11z" fill="url(#hexfill)" stroke="#000" strokeWidth="1" />
        <g stroke="#fff" strokeWidth="1.4">{children}</g>
      </Svg>
    </button>
  );
}

function Box({ label, fill = "url(#btnfill)", bare, children }) {
  return (
    <button type="button" aria-label={label} className="flex h-7 w-7 items-center justify-center">
      <Svg>
        {!bare && <rect x="1" y="1" width="22" height="22" rx="2" fill={fill} stroke="#111" strokeWidth="1.5" />}
        {children}
      </Svg>
    </button>
  );
}

const hexText = (t, s) => <text x="12" y={t.length > 1 ? 17 : 19} textAnchor="middle" fontFamily="Liberation Serif, serif" fontWeight="700" fontSize={s} fill="#fff" stroke="none">{t}</text>;

const RIBBON = [
  ["Geometry", [
    [<Hex key="a" label="Point"><path d="M8.5 8.5l7 7M15.500 8.500l-7 7" strokeWidth="2.800" /></Hex>, <Hex key="b" label="Vector"><path d="M7 17l7-7" strokeWidth="2.5" /><path d="M18 6l-2 8-6-6z" fill="#fff" /></Hex>],
    [<Hex key="a" label="Circle"><ellipse cx="12" cy="12" rx="6.5" ry="5" strokeWidth="2" /></Hex>, <Hex key="b" label="Arc"><path d="M6 7c6 0 9 5 9 12M3 11l6-6M11 18h7" /></Hex>,
      <Hex key="c" label="Curve"><ellipse cx="12" cy="12" rx="8" ry="4.5" transform="rotate(-45 12 12)" /><ellipse cx="13" cy="12" rx="5" ry="2" transform="rotate(-45 13 12)" /></Hex>, <Hex key="d" label="Line"><path d="M7 17l10-10" strokeWidth="2" /><rect x="5" y="15" width="4" height="4" fill="#111" /><rect x="15" y="5" width="4" height="4" fill="#111" /></Hex>,
      <Hex key="e" label="Plane"><path d="M4 11l12-5 4 6-13 5z" fill="#999" /><path d="M10 8.500l3 6M6 14l12-5" /></Hex>, <Hex key="f" label="Rectangle"><path d="M12 5l7 7-7 7-7-7z" /><path d="M6 6l12 12M18 6L6 18" stroke="#999" strokeWidth="1" /><path d="M12 8l4 4-4 4-4-4z" fill="#333" /></Hex>],
    [<Hex key="a" label="Box"><path d="M6 9l6-4 6 2v8l-6 4-6-3z" fill="#ddd" /><path d="M6 9l6 2 6-4M12 11v8" stroke="#333" /></Hex>, <Hex key="b" label="Brep"><path d="M5 13l5-7c4-2 8 1 8 5l-4 7c-4 2-8-1-9-5z" fill="#ccc" /><ellipse cx="9" cy="14" rx="3" ry="4.500" transform="rotate(-35 9 14)" fill="#777" stroke="#fff" strokeWidth="1" /></Hex>,
      <Hex key="c" label="Mesh"><path d="M12 4v16M5 12h14M7 7l10 10M17 7L7 17M8 8h8v8H8z" strokeWidth="1" /></Hex>, <Hex key="d" label="Surface"><path d="M6 16c4-2 4-6 4-10h8v13c-4 0-8-1-12-3z" fill="#ddd" /><path d="M14 6v12M9 12h9" stroke="#555" strokeWidth=".8" /></Hex>],
  ]],
  ["Primitive", [
    [<Hex key="a" label="Boolean"><circle cx="12" cy="12" r="6" strokeWidth="1.6" /><path d="M7.800 16.200a6 6 0 0 1 8.400-8.400z" fill="#000" stroke="none" /><path d="M16.200 7.800a6 6 0 0 1-8.400 8.400z" fill="#fff" /></Hex>, <Hex key="b" label="Integer">{hexText("7", 19)}</Hex>,
      <Hex key="c" label="Number">{hexText("0.1", 14)}</Hex>, <Hex key="d" label="Text">{hexText("A", 19)}</Hex>],
  ]],
  ["Input", [
    [<Box key="a" label="Number slider"><path d="M12 5v7" strokeWidth="3" /><path d="M7 11h10l-5 5z" fill="#111" /><path d="M3 19h18M4 17v4M7 17v4M10 17v4M14 17v4M17 17v4M20 17v4" /></Box>, <Box key="b" label="Panel" fill="#fbc72c"><path d="M4 18l4-6v6l5-10-1 10 5-12v10l3-5" stroke="#a86808" strokeWidth="2" /></Box>],
    [<Box key="a" label="Boolean toggle"><rect x="7" y="3" width="10" height="17" fill="#111" /><rect x="9" y="5" width="6" height="6" fill="#eee" /></Box>, <Box key="b" label="Knob" bare><circle cx="12" cy="12" r="11" fill="#999" stroke="#333" /><circle cx="12" cy="12" r="8" fill="#333" /><path d="M22 8v8l-5-4z" fill="#ddd" /></Box>,
      <Box key="c" label="Digit scroller"><path d="M13 1L9 6h7M14 3v5M14 12H9l-1 4c4-1 6 0 5 3-1 2-3 3-5 2" strokeWidth="2" stroke="#444" /></Box>, <Box key="d" label="Value list"><path d="M4 4h16v4H4zM4 10h16v4H4zM4 16h16v4H4z" fill="#e6e6e6" stroke="#333" /></Box>],
    [<Box key="a" label="Gradient" fill="#e0158c"><path d="M2 2h20v5H2z" fill="#f59aca" stroke="none" /><path d="M2 15h20v7H2z" fill="#f7cfe4" stroke="none" /><path d="M1 15h22" /><circle cx="3" cy="15" r="1.8" fill="#fff" /><circle cx="16" cy="15" r="1.8" fill="#fff" /></Box>,
      <Box key="b" label="Image sampler" fill="#5fd02a"><path d="M2 2h5v5H2zM12 7h5v5h-5zM7 12h5v5H7zM17 12h5v5h-5z" fill="#1c7a10" stroke="none" /><path d="M7 2h5v5H7zM17 7h5v5h-5zM2 17h5v5H2z" fill="#b6f23c" stroke="none" /><path d="M17 17h5v5h-5z" fill="#5fe8c0" stroke="none" /></Box>],
  ]],
  ["Util", [
    [<Box key="a" label="Cherry picker" bare><path d="M6 14C7 9 9 6 12 4M18 15c0-5-3-9-6-11" stroke="#4a6a1c" /><circle cx="6" cy="17" r="4.5" fill="#e0182a" stroke="#8a0612" /><circle cx="18" cy="18" r="4.5" fill="#e0182a" stroke="#8a0612" /><path d="M4 5c2-4 6-4 9-2-2 3-6 4-9 2z" fill="#6db52a" stroke="#3d6d10" /></Box>, <Box key="b" label="Data tree"><path d="M12 21v-8M12 15l-5-4-3 1M7 11L5 7M12 14l5-4 3 1M17 10l2-4M12 14l-2-6-2-2M10 8l2-4M12 12l3-4V4" strokeWidth="1.5" /><g fill="#111" stroke="none"><circle cx="6" cy="7" r="2" /><circle cx="10" cy="5" r="2" /><circle cx="15" cy="5" r="2" /><circle cx="19" cy="7" r="2" /><circle cx="4.500" cy="11" r="1.500" /><circle cx="20" cy="11" r="1.500" /></g></Box>],
    [<Box key="a" label="Forward" bare><path d="M2 8h11V4l9 8-9 8v-4H2z" fill="#444" /></Box>, <Box key="b" label="Relay" bare><path d="M2 9h11V4l9 8-9 8v-5H2z" fill="#f2f2f2" stroke="#666" /></Box>],
    [<Box key="a" label="Suirify" bare><circle cx="9" cy="9" r="7" fill="#bbb" stroke="#555" /><circle cx="9" cy="9" r="2.5" fill="#eee" stroke="#777" /><circle cx="16" cy="15" r="6" fill="#e0568c" stroke="#8a1c46" /><ellipse cx="15" cy="15" rx="2" ry="3" fill="#fbd" stroke="none" /></Box>, <Box key="b" label="Trigger" bare><path d="M10 2h4v8l6 12H4l6-12z" fill="#f3e3ea" stroke="#666" /><path d="M8 14h8l4 8H4z" fill="#e0307c" stroke="none" /></Box>],
  ]],
];

function Ribbon() {
  return (
    <div className="flex h-[84px] shrink-0 items-start gap-1 rounded-tr-lg border-t border-[#9d9d9d] bg-gradient-to-b from-[#d9d9d9] to-[#f2f2f2] pt-[2px] pl-[2px]">
      {RIBBON.map(([name, groups]) => (
        <section key={name} className="flex flex-col overflow-hidden rounded-[4px] border border-[#8f8f8f] bg-gradient-to-b from-[#d2d2d2] to-[#f0f0f0]">
          <div className="flex h-[58px] items-start justify-center px-px">
            {groups.map((g, i) => (
              <React.Fragment key={i}>
                {i > 0 && <span className="mx-[4px] mt-1 h-[50px] w-[2px] border-l border-[#b5b5b5] bg-[#efefef]" />}
                <div className="grid grid-flow-col grid-rows-2">{g}</div>
              </React.Fragment>
            ))}
          </div>
          <button type="button" className="relative h-[14px] bg-gradient-to-b from-[#333] to-[#0c0c0c] pr-3 text-[11px] leading-[13px] text-[#f0f0f0]">
            {name}
            <svg width="8" height="8" className="absolute top-[3px] right-[2px]" aria-hidden="true"><path d="M4 0v8M0 4h8" stroke="#999" strokeWidth="1.5" /></svg>
          </button>
        </section>
      ))}
    </div>
  );
}

const Caret = () => <svg width="6" height="4" aria-hidden="true"><path d="M0 0h6L3 3.500z" fill="#111" /></svg>;
const Sep = ({ className = "" }) => <span className={`h-[22px] w-px bg-[#bdbdbd] ${className}`} />;
const iconBtn = "flex h-[28px] w-[28px] items-center justify-center";

function CanvasToolbar() {
  const cyl = "M2 13L10 3c4-3 11 0 12 6l-8 12c-5 3-12-2-12-8z";
  return (
    <div className="flex h-[33px] shrink-0 items-center border-t-2 border-[#8b8d8b] bg-gradient-to-b from-[#fcfcfc] to-[#f0f0f0] pl-[3px]">
      <button type="button" aria-label="Open" className={iconBtn}><Svg><path d="M4 10V4l5-3h9v9" fill="#fff" stroke="#777" /><path d="M2 11h11l2-2h7v13H2z" fill="#67b83a" stroke="#2e6d12" /><path d="M3 13h18" stroke="#c2e8a6" /></Svg></button>
      <button type="button" aria-label="Save" className={`${iconBtn} ml-[3px]`}><Svg><path d="M1 1h22v22H3l-2-2z" fill="#2a6fd6" stroke="#0d2f7a" /><path d="M5 1h14v11H5z" fill="#f0f4fa" stroke="none" /><path d="M7 4h10M7 7h10" stroke="#9ab" /><path d="M6 15h12v8H6z" fill="#cdd9ec" /><path d="M8 17h4v6H8z" fill="#124" /></Svg></button>
      <Sep className="ml-1" />
      <div className="relative ml-1">
        <select aria-label="Zoom" defaultValue="125%" className={`h-[29px] w-[92px] appearance-none border border-[#a5a5a5] bg-white px-[3px] text-[16px] text-[#222] ${seg}`}>
          <option>100%</option>
          <option>125%</option>
          <option>150%</option>
        </select>
        <svg width="10" height="8" className="pointer-events-none absolute top-[11px] right-[5px]" fill="none" aria-hidden="true"><path d="M1 1.500l4 4 4-4" stroke="#333" strokeWidth="1.800" /></svg>
      </div>
      <button type="button" aria-label="Zoom extents" className="ml-[5px] flex items-center gap-[6px]"><Svg size={22}><path d="M3 8V3h5M16 3h5v5M21 16v5h-5M8 21H3v-5" strokeWidth="3.500" stroke="#222" /><path d="M9.500 9.500l5 5M14.500 9.500l-5 5M12 2v3M12 19v3M2 12h3M19 12h3" strokeWidth="1.800" /></Svg><Caret /></button>
      <button type="button" aria-label="Preview" className="ml-[6px] flex items-center gap-[6px]"><Svg><path d="M1 13C5 3 19 3 23 13c-4 8-18 8-22 0z" fill="#f4f8fc" stroke="#234" strokeWidth="1.5" /><circle cx="12" cy="12" r="6" fill="#4aa3df" stroke="#146" /><circle cx="12" cy="12" r="2.5" fill="#012" /><circle cx="10" cy="10" r="1.3" fill="#fff" stroke="none" /></Svg><Caret /></button>
      <button type="button" aria-label="Sketch" className="ml-[4px]"><Svg><path d="M23 2C18 6 13 11 10 17l3 5c6-2 9-5 10-9z" fill="#dd3524" stroke="#8f1508" strokeWidth=".8" /><path d="M22 5c-4 3-7 7-9 12" stroke="#ff9a86" strokeWidth="2" /><path d="M10 16l4 5-6 1z" fill="#f6cf8a" stroke="#742" strokeWidth=".8" /><path d="M2 9c3-3 5 0 4 4s-5 10 3 9" stroke="#311" strokeWidth="1.8" /></Svg></button>
      <div className="ml-auto flex items-center">
        <button type="button" aria-label="No preview" className={iconBtn}><Svg><path d="M5 12l5-9c3-3 9-1 10 3l-3 8z" fill="#ddd" stroke="#777" /><ellipse cx="15" cy="5" rx="3.500" ry="2.500" fill="#f4f4f4" stroke="#888" /><ellipse cx="12" cy="17" rx="9" ry="5.5" fill="#333" /><path d="M3 16c5 4 13 4 18 0" stroke="#999" /></Svg></button>
        <button type="button" aria-label="Wireframe preview" className={iconBtn}><Svg><path d={cyl} fill="#f7f7f7" stroke="#555" /><ellipse cx="16" cy="8" rx="3.5" ry="5" transform="rotate(-40 16 8)" stroke="#555" /><ellipse cx="8" cy="16" rx="3.5" ry="5" transform="rotate(-40 8 16)" stroke="#777" /></Svg></button>
        <button type="button" aria-label="Shaded preview" className={`${iconBtn} border border-[#3a96dd] bg-[#eaf4fc]`}><Svg><path d={cyl} fill="url(#redfill)" stroke="#5a0505" /><ellipse cx="16" cy="7" rx="3" ry="4.500" transform="rotate(-50 16 7)" fill="#8c0b0b" stroke="#d44" /></Svg></button>
        <Sep className="mr-[6px] ml-2" />
        <button type="button" aria-label="Preview selected" className={iconBtn}><Svg><path d={cyl} fill="#ddd" stroke="#666" /><path d="M7 7l5-5c5-1 10 3 10 7l-4 7z" fill="#4ea81e" stroke="#245d08" /><ellipse cx="16" cy="7" rx="2.500" ry="3.500" transform="rotate(-50 16 7)" fill="#2c6d0c" stroke="none" /><path d="M2 3l19 19" stroke="#222" /></Svg></button>
        <button type="button" aria-label="Document preview" className={iconBtn}><Svg><circle cx="12" cy="11.500" r="10" fill="#e6e6e6" stroke="#555" /><path d="M12 1.500a10 10 0 0 0 0 20z" fill="#f0902a" stroke="#8a4a08" /></Svg></button>
        <Sep className="mr-[3px] ml-1" />
        <button type="button" aria-label="Mesh quality" className="mr-1 flex items-center gap-[4px]"><Svg size={22}><path d="M12 1l8 3 3 8-3 7-8 4-8-4-3-7 3-8z" fill="#5fa9ee" stroke="#1b4f92" /><path d="M7 5l5-2 6 3-3 5-8 1z" fill="#b7dcfb" stroke="none" /></Svg><Caret /></button>
      </div>
    </div>
  );
}

/* Nodes sit at free positions on the canvas; offsets are relative to it. */
const nodeBase = "absolute rounded-[4px] border border-[#3c3c3c] bg-gradient-to-b from-[#fafafa] via-[#e4e4e4] to-[#c9c9c9] text-[#141414] shadow-[1px_2px_2px_rgba(0,0,0,0.25)]";

function SliderNode({ id, label, value, max, place, labelWidth, valuePos, track }) {
  return (
    <div className={`${nodeBase} flex h-[26px] overflow-hidden text-[16px] ${seg} ${place}`}>
      <label htmlFor={id} className={`shrink-0 border-r border-[#3c3c3c] bg-gradient-to-b from-[#b4b3c4] to-[#8f8ea3] text-center leading-[24px] ${labelWidth}`}>{label}</label>
      <div className="relative flex-1">
        <svg className="absolute top-[7px] left-3 h-2 w-[124px]" aria-hidden="true">
          <path d="M0 6.500H124M.5 0v7M18 2v5M35 2v5M53 2v5M71 2v5M88 2v5M106 2v5M123.500 0v7" stroke="#b2b2b2" fill="none" />
        </svg>
        <output htmlFor={id} className={`absolute top-0 bg-[#e6e6e6] leading-[22px] ${valuePos}`}>{value}</output>
        <input
          id={id}
          type="range"
          min="0"
          max={max}
          defaultValue={value}
          className={`absolute top-0 left-2 h-6 appearance-none bg-transparent [&::-webkit-slider-thumb]:h-[7px] [&::-webkit-slider-thumb]:w-[7px] [&::-webkit-slider-thumb]:rotate-45 [&::-webkit-slider-thumb]:appearance-none [&::-webkit-slider-thumb]:border-2 [&::-webkit-slider-thumb]:border-black [&::-webkit-slider-thumb]:bg-white ${track}`}
        />
      </div>
    </div>
  );
}

const GRIPS = [[227, 241], [290, 241], [439, 271], [440, 301], [548, 241], [548, 270], [548, 299], [685, 248], [685, 291], [739, 190], [973, 190], [766, 296], [829, 296]];

function Canvas() {
  return (
    <main className="relative min-h-0 flex-1 overflow-hidden bg-[#d4d0c8]">
      <svg className="absolute inset-0 h-full w-full" fill="none" aria-hidden="true">
        <defs>
          <pattern id="hatch" width="5" height="5" patternUnits="userSpaceOnUse"><path d="M-1 6L6 -1M-1 1l2-2M4 6l2-2" stroke="#5a5848" strokeOpacity=".22" /></pattern>
          <pattern id="grid" x="48" y="21" width="187.500" height="62.600" patternUnits="userSpaceOnUse"><path d="M.5 0v62.600M0 .5h187.500" stroke="#000" strokeOpacity=".14" /></pattern>
          <linearGradient id="shl" x1="0" x2="1" y1="0" y2="0"><stop offset="0" stopColor="#555" stopOpacity="0" /><stop offset=".45" stopColor="#555" stopOpacity=".14" /><stop offset="1" stopColor="#333" stopOpacity=".6" /></linearGradient>
          <linearGradient id="sht" x1="0" x2="0" y1="0" y2="1"><stop offset="0" stopColor="#444" stopOpacity=".28" /><stop offset="1" stopColor="#333" stopOpacity=".56" /></linearGradient>
          <linearGradient id="outwire" gradientUnits="userSpaceOnUse" x1="688" y1="248" x2="737" y2="190"><stop offset="0" stopColor="#ea6b3a" /><stop offset=".5" stopColor="#b5a53a" /><stop offset="1" stopColor="#7fc435" /></linearGradient>
        </defs>
        <rect width="49" height="100%" fill="url(#hatch)" />
        <rect x="49" width="100%" height="22" fill="url(#hatch)" />
        <rect y="22" width="49" height="100%" fill="url(#shl)" />
        <rect x="49" width="100%" height="22" fill="url(#sht)" />
        <path d="M0 0h49v22H12z" fill="url(#shl)" />
        <rect width="100%" height="100%" fill="url(#grid)" />
        <path d="M49.500 1200V22.500H3000" stroke="#000" strokeWidth="1" />
        <g stroke="#5c5b54" strokeWidth="3.500">
          <path d="M293 241H545M443 271.500L545 269.500M444 301L545 298.500" />
          <path d="M689 290c40 0 30 4 74 4M689 293c40 0 30 5 74 5" strokeWidth="2" />
        </g>
        <path d="M689 248c28-2 14-56 48-58" stroke="url(#outwire)" strokeWidth="4" />
        <g fill="#fff" stroke="#000" strokeWidth="2">
          {GRIPS.map(([x, y]) => <circle key={`${x}-${y}`} cx={x} cy={y} r="5" />)}
        </g>
      </svg>
      <div className={`${nodeBase} top-[228px] left-[227px] h-[26px] w-[64px] text-center text-[16px] leading-[24px] ${seg}`}>Pt</div>
      <SliderNode id="intn" label="intN" value="10000" max="10000" place="top-[258px] left-[228px] w-[212px]" labelWidth="w-[51px]" valuePos="right-[23px]" track="w-[143px]" />
      <SliderNode id="sseed" label="sSeed" value="7" max="10" place="top-[288px] left-[227px] w-[214px]" labelWidth="w-[63px]" valuePos="left-[80px]" track="w-[132px]" />
      <div className={`${nodeBase} top-[225px] left-[548px] flex h-[92px] w-[138px] text-[16px] ${seg}`}>
        <div className="flex w-[54px] flex-col justify-around text-right leading-6"><span>PtoO</span><span>intN</span><span>sSeed</span></div>
        <div className="mt-[2px] ml-[6px] flex h-[86px] w-[31px] items-center justify-center rounded-[4px] border border-black bg-gradient-to-b from-[#808080] via-[#3e3e3e] to-[#333] text-[20px] font-bold text-white">
          <span className="rotate-180 [writing-mode:vertical-rl]">Python</span>
        </div>
        <div className="flex flex-1 flex-col justify-around pl-[6px] leading-6"><span>out</span><span>a</span></div>
      </div>
      <div className={`${nodeBase} top-[283px] left-[766px] h-[26px] w-[64px] text-center text-[16px] leading-[24px] ${seg}`}>Crv</div>
      <div className="absolute top-[138px] left-[739px] flex h-[105px] w-[234px] items-center justify-center rounded-[4px] border border-[#1f4a10] bg-[#9aff34] pr-3 pb-2 text-center font-['Liberation_Mono',monospace] text-[17px] leading-[19px] text-[#66ab27] shadow-[inset_0_2px_1px_#d8ffb0]">
        No data was<br />collected…
      </div>
      <svg width="18" height="20" className="absolute top-[123px] left-[954px]" aria-hidden="true"><path d="M2 1h14l1 1v13l-1 1h-5l-2 3-2-3H2l-1-1V2z" fill="#f8bd2c" stroke="#b87e08" /><path d="M2 2h14v5H2z" fill="#fde9b0" /></svg>
      <div className="absolute bottom-[2px] left-0 h-[28px] w-[7px] border border-l-0 border-black bg-gradient-to-b from-[#c9c9c9] to-[#777]" />
      <button type="button" aria-label="Navigation compass" className="absolute right-[7px] bottom-2">
        <svg width="48" height="48" fill="none" aria-hidden="true" className="block">
          <circle cx="26" cy="26" r="20" fill="url(#disc)" stroke="#333" strokeWidth="1.5" />
          <circle cx="26" cy="26" r="18" stroke="#fff" strokeWidth="2" />
          <path d="M10 19l7-6 1 4zM33 12l7 6-5 1zM10 33l7 7 1-5zM42 33l-8 7 1-5z" fill="#fff" />
          <path d="M1 4l9 1-1 2c3-2 7-3 10-3-3 1-8 5-10 9l-2-3-2 2z" fill="#000" />
        </svg>
      </button>
    </main>
  );
}

function GrasshopperWindow() {
  return (
    <section className="flex min-w-0 flex-col border-t border-r border-t-[#ab4a42] border-r-[#a5524b] bg-[#d26a60] px-2 pb-[9px] font-['Liberation_Sans',Arial,sans-serif]">
      <header className="relative flex h-9 shrink-0 items-start justify-end">
        <h2 className={`absolute inset-x-0 top-[3px] text-center text-[18px] leading-[30px] text-[#452522] ${seg}`}>Grasshopper - SV_EJ01</h2>
        <button type="button" aria-label="Minimize" className="relative h-[26px] w-9"><svg width="36" height="26" aria-hidden="true"><path d="M10 17.500h14" stroke="#3a1a18" strokeWidth="2" /></svg></button>
        <button type="button" aria-label="Maximize" className="relative h-[26px] w-[31px]"><svg width="31" height="26" fill="none" aria-hidden="true"><path d="M8.500 7.500h13v11h-13z" stroke="#3a1a18" /><path d="M8 8.500h14" stroke="#3a1a18" strokeWidth="3" /></svg></button>
        <button type="button" aria-label="Close" className="relative flex h-[26px] w-[58px] items-center justify-center bg-[#c94f50]"><svg width="12" height="10" aria-hidden="true"><path d="M1 .5l9 9M10 .5l-9 9" stroke="#fff" strokeWidth="2.200" /></svg></button>
      </header>
      <div className="flex min-h-0 flex-1 flex-col border border-[#a5524b] bg-[#f0f0f0]">
        <nav className="flex h-[25px] shrink-0 items-center bg-gradient-to-r from-[#f0f0f0] to-[#fdfdfd] pt-[2px] pl-[6px] text-[14px] text-black">
          {["File", "Edit", "View", "Display", "Solution", "Help"].map((m) => <button key={m} type="button" className="px-[10px]">{m}</button>)}
          <button type="button" className="mr-[10px] ml-auto">SV_EJ01</button>
        </nav>
        <nav className="flex h-[22px] shrink-0 items-center text-[13px] text-[#6b6b6b]">
          <button type="button" className="mr-[7px] h-[22px] w-[64px] rounded-t-md border border-b-0 border-[#9d9d9d] bg-white pb-[2px] text-black">Params</button>
          {["Maths", "Sets", "Vector", "Curve", "Surface", "Mesh", "Intersect", "Transform", "Display", "Elefront"].map((m) => <button key={m} type="button" className="mr-[18px] pt-[3px]">{m}</button>)}
        </nav>
        <Ribbon />
        <CanvasToolbar />
        <div className="flex min-h-0 flex-1 px-px"><div className="flex min-w-0 flex-1 flex-col"><Canvas /></div></div>
        <footer className="flex h-[22px] shrink-0 items-center border-t-2 border-white bg-[#f6f6f6] pt-px pl-[2px] text-[14px] text-black">
          <Svg size={17}><circle cx="12" cy="12" r="11" fill="#2a7fd6" stroke="#0d2f6a" strokeWidth="2" /><path d="M12 4v10" stroke="#fff" strokeWidth="3.500" /><circle cx="12" cy="18" r="2" fill="#fff" stroke="none" /></Svg>
          <span className="ml-[2px]">Save successfully completed… (8 seconds ago)</span>
          <span className="mr-[10px] ml-auto text-[#7a7a7a]">0.9.0076</span>
          <svg width="14" height="14" aria-hidden="true" className="mt-1"><path d="M10 1h2v2h-2zM6 5h2v2H6zM10 5h2v2h-2zM2 9h2v2H2zM6 9h2v2H6zM10 9h2v2h-2z" fill="#b5b5b5" /></svg>
        </footer>
      </div>
    </section>
  );
}

/* ---------- sliver of the window behind ---------- */

const Gear = () => (
  <svg width="12" height="20" viewBox="0 0 12 20" fill="none" stroke="#777" aria-hidden="true" className="block">
    <circle cx="3" cy="10" r="5.5" strokeDasharray="2.500 1.500" strokeWidth="2" /><circle cx="3" cy="10" r="2" />
  </svg>
);

function BackWindow() {
  return (
    <aside className="flex flex-col overflow-hidden bg-[#e0e4ec] font-['Liberation_Sans',Arial,sans-serif] text-[14px] text-black">
      <div className="mr-[3px] h-[25px] shrink-0 bg-[#c0c0c0]" />
      <div className="mt-1 h-7 shrink-0 bg-[#f5f6f7]" />
      <svg width="12" height="56" fill="none" className="shrink-0" aria-hidden="true">
        <path d="M0 6l4 4M0 26l4-4" stroke="#555" strokeWidth="2" />
        <path d="M-2 35h12v8H-2zM-2 46h12v8H-2z" fill="#f4f4f4" stroke="#8e96a4" />
        <path d="M0 36l4 4H0zM0 52l4-4H0z" fill="#111" />
      </svg>
      <div className="h-[25px] shrink-0 border-b border-[#a9afba] pt-1"><Gear /></div>
      <div className="h-[63px] shrink-0 bg-gradient-to-b from-[#eef0f6] to-[#dfe3eb] pt-[43px]"><Gear /></div>
      <div className="mr-[2px] flex flex-1 flex-col border-t border-r border-[#9aa3b3] bg-white">
        <div className="h-[24px] shrink-0 border-b border-[#b5bac8] bg-[#f2f3f6]" />
        <span className="h-[24px] leading-[24px]">eL</span>
        <span className="h-[20px] leading-[20px] font-bold">ua</span>
        {[0, 1, 2, 3, 4].map((i) => <span key={i} className="h-5 leading-5">a</span>)}
      </div>
      <div className="mr-[2px] flex h-[20px] shrink-0 items-center border-b border-[#9aa3b3] bg-[#f0f0f0]"><svg width="6" height="8" fill="none" aria-hidden="true"><path d="M1 1l3 3-3 3" stroke="#333" strokeWidth="1.800" /></svg></div>
      <div className="h-[49px] shrink-0 border-b border-[#b5bac8]" />
      <div className="ml-1 h-[22px] shrink-0 border-l border-[#9aa3b3]" />
    </aside>
  );
}

/* ---------- taskbar ---------- */

const Adobe = ({ t, c, bg }) => (
  <span className={`flex h-[37px] w-[37px] items-center justify-center border-[3px] font-['Noto_Sans',sans-serif] text-[20px] leading-none font-semibold ${c} ${bg}`}>{t}</span>
);

const WinLogo = ({ s }) => (
  <svg width={s} height={s} viewBox="0 0 32 32" fill="#fff" aria-hidden="true"><path d="M0 5l14-2v12H0zM15.500 2.800L32 0v15H15.500zM0 17h14v12L0 27zM15.500 17H32v15l-16.500-2.500z" /></svg>
);

const APPS = [
  ["Explorador de archivos", "", <svg key="i" width="40" height="40" viewBox="0 0 40 40" aria-hidden="true"><path d="M2 5l3-4h10l2 3h14l2 3v29H2z" fill="#e8cf6a" /><path d="M6 3h8v3H6z" fill="#3aa655" /><path d="M15 6h12v3H15z" fill="#d9482b" /><path d="M25 8h7v3h-7z" fill="#3a7bd5" /><path d="M1 11h37l-2 26H3z" fill="#f6e58e" /><path d="M6 37V25l3-2h22l4 2v12h-7v-7H13v7z" fill="#9fd3f0" stroke="#62a9d8" /></svg>],
  ["Configuración", "", <svg key="i" width="38" height="38" viewBox="0 0 38 38" aria-hidden="true"><path d="M0 0h38v38H0z" fill="#0d4a70" /><path d="M0 0h38L0 30z" fill="#2a7196" opacity=".6" /><path d="M7 7h24v23H7z" fill="#fff" /><rect x="10" y="10" width="18" height="5" rx="2.5" fill="#1d6a94" /><circle cx="25" cy="12.500" r="2" fill="#fff" /><path d="M10 19.500h18M10 25.500h18" stroke="#0d4a70" strokeWidth="1.500" /><circle cx="15" cy="19.500" r="2.300" fill="#0d4a70" /><circle cx="23" cy="25.500" r="2.300" fill="#0d4a70" /></svg>],
  ["Dragón", "", <svg key="i" width="40" height="40" viewBox="0 0 40 40" aria-hidden="true"><path d="M0 0h40v40H0z" fill="#a50f15" /><path d="M1 1h38v38H1z" fill="none" stroke="#e02c2c" strokeWidth="2" /><path d="M2 3c9-2 17 1 23 4l1-5 4 7 5 5 2 6-3 4-2-4-3 4-2-4-4 1c-1 4 1 7 5 8l6-1-2 7-7-3-4-4-2 5c-4 0-6-2-7-5-3 2-5 6-8 11 0-7 1-11 3-14-3 1-4 4-5 7-1-6 0-10 3-13-3-1-4-2-5-5l6-1c-2-3-4-6-6-10z" fill="#f4f4f4" /><path d="M22 12l6 3-4 1zM13 14c3 1 5 3 5 6l-4-3z" fill="#8a0d12" /></svg>],
  ["Chrome", "border border-white/30 bg-white/20", <svg key="i" width="40" height="40" viewBox="0 0 40 40" aria-hidden="true"><circle cx="19" cy="19" r="18" fill="#fbc02d" /><path d="M19 19L3.400 10a18 18 0 0 1 31.200 0z" fill="#dd4b3e" /><path d="M19 19L3.400 10A18 18 0 0 0 17 37l8-14z" fill="#2da94f" /><circle cx="19" cy="19" r="8.500" fill="#fff" /><circle cx="19" cy="19" r="7" fill="#4285f4" /><path d="M21 25l2-2h9l2 2v7l3-5v9l-3 2H23l-1-6z" fill="#1a1a1a" /><path d="M23 26h9v2h-9z" fill="#f0a030" /></svg>],
  ["Rhinoceros", "border-2 border-white/80 bg-white/40", <svg key="i" width="40" height="40" viewBox="0 0 40 40" aria-hidden="true"><path d="M0 0h40v40H0z" fill="#ededed" /><path d="M16 0h24v32l-4-8-8-6c-3-3-4-6-4-8-5 0-8-4-8-10z" fill="#161616" /><path d="M0 17c5 3 9 7 13 12 5 5 9 8 14 11H0z" fill="#161616" /><path d="M4 0h8L6 11H3zM12 16l5 4 6 1-2 4-6-1z" fill="#777" /><path d="M12 15l6 12M24 10l-8 6" stroke="#444" fill="none" /><path d="M17 21h4" stroke="#d22" strokeWidth="2" /><path d="M27 33l4 2 6-3-3 6h-6z" fill="#aaa" /><path d="M.5.5h39v39H.5z" fill="none" stroke="#111" /></svg>],
  ["Illustrator", "", <Adobe key="i" t="Ai" c="border-[#f58220] text-[#f58220]" bg="bg-[#2b1408]" />],
  ["InDesign", "", <Adobe key="i" t="Id" c="border-[#ee3a8c] text-[#ee3a8c]" bg="bg-[#2c0a1c]" />],
  ["Photoshop", "", <Adobe key="i" t="Ps" c="border-[#4ab8e8] text-[#4ab8e8]" bg="bg-[#0a1a2c]" />],
  ["GitHub", "border border-white/30 bg-white/20", <svg key="i" width="38" height="38" viewBox="0 0 38 38" aria-hidden="true"><circle cx="19" cy="19" r="18.500" fill="#f4f0fa" /><path d="M9 7l5 3c3-1 7-1 10 0l5-3 1 7c3 7-2 11-7 12 2 2 2 6 2 11H14v-5c-5 1-6-2-8-5 3-1 4 3 8 2 0-1 0-2 1-3-5-1-10-5-7-12z" fill="#4e2a84" /></svg>],
];

function Taskbar() {
  return (
    <footer className={`flex h-12 shrink-0 items-center bg-gradient-to-r from-[#792c29] via-[#8f302a] via-50% to-[#822d27] text-white ${seg}`}>
      <button type="button" aria-label="Inicio" className="flex h-12 w-[60px] items-center justify-center"><WinLogo s={32} /></button>
      <div className="flex gap-1 pl-px">
        {APPS.map(([label, cls, icon]) => (
          <button key={label} type="button" aria-label={label} className={`flex h-[46px] w-[69px] items-center justify-center ${cls}`}>{icon}</button>
        ))}
      </div>
      <div className="ml-auto flex items-center pr-5">
        <button type="button" aria-label="Iconos ocultos"><svg width="10" height="8" aria-hidden="true"><path d="M5 1l4 6H1z" fill="#fff" /></svg></button>
        <span className="ml-[14px]"><WinLogo s={19} /></span>
        <svg width="18" height="20" className="ml-3" fill="none" stroke="#fff" aria-hidden="true"><rect x="9" y="3" width="7" height="15" strokeWidth="2" /><path d="M11 1h3" strokeWidth="2" /><path d="M2 1v4M5 1v4M1 5h5v4L4 11v8" strokeWidth="1.500" /></svg>
        <svg width="17" height="18" className="ml-3" fill="#fff" aria-hidden="true"><path d="M0 14h2v3H0zM3 12h2v5H3zM6 9h2v8H6zM9 6h2v11H9zM12 3h2v14h-2z" /></svg>
        <svg width="18" height="20" className="ml-3" fill="none" aria-hidden="true"><path d="M1 7h3l5-5v16l-5-5H1z" fill="#fff" /><path d="M12 7c2 2 2 4 0 6" stroke="#e8c8c4" /></svg>
        <button type="button" className="ml-[21px] text-center text-[14px] leading-[22px]">ESP<br />ES</button>
        <time className="ml-6 text-center text-[14px] leading-[22px]">15:04<br />11/11/2015</time>
      </div>
    </footer>
  );
}

export default function App() {
  return (
    <div className="flex h-screen flex-col overflow-hidden bg-[#792c29]">
      <Defs />
      <div className="grid min-h-0 flex-1 grid-cols-[784fr_1124fr_12px] grid-rows-1">
        <RhinoWindow />
        <GrasshopperWindow />
        <BackWindow />
      </div>
      <Taskbar />
    </div>
  );
}
